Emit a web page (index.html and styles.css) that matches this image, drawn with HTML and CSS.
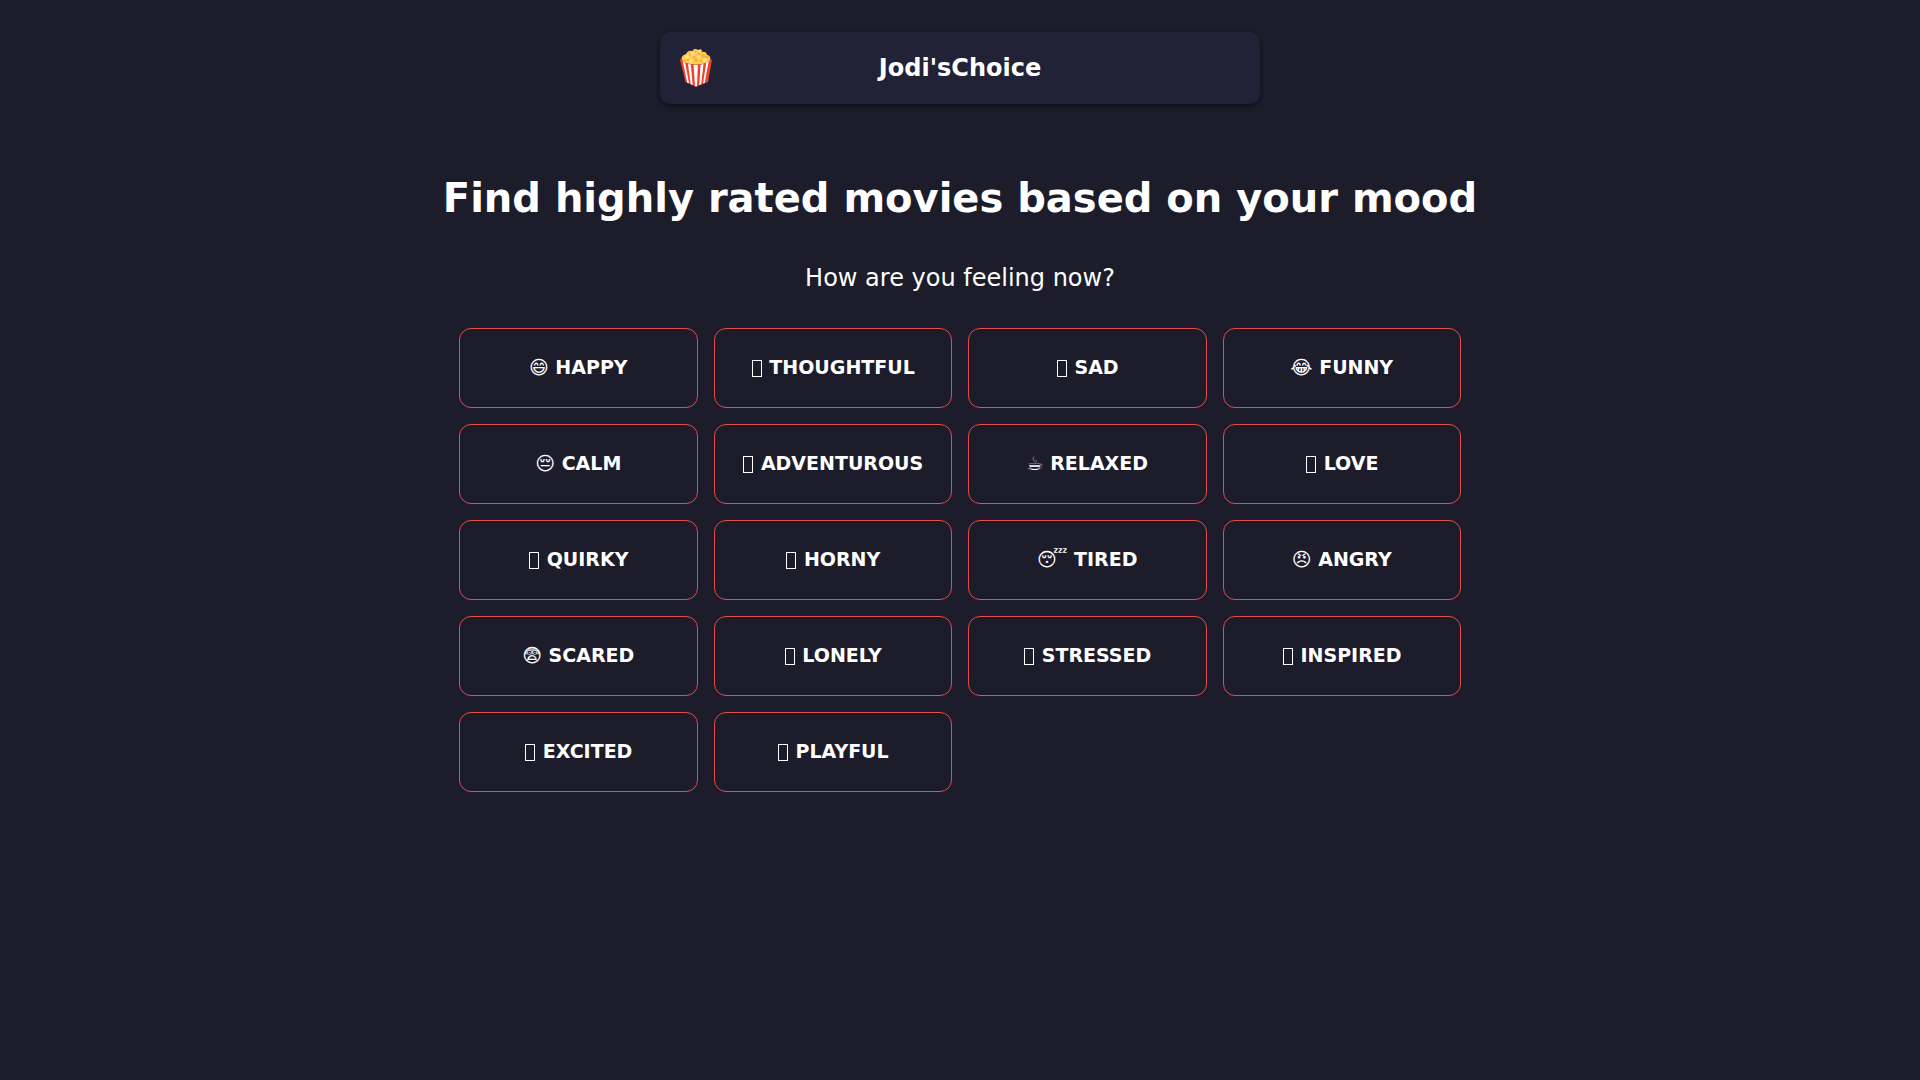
FILE: index.html
```html
<!DOCTYPE html>
<html lang="en">
<head>
<meta charset="utf-8">
<meta name="viewport" content="width=device-width, initial-scale=1">
<title>Jodi'sChoice</title>
<link rel="stylesheet" href="styles.css">
</head>
<body>
<header class="topbar">
  <svg class="logo" viewBox="0 0 40 40" aria-hidden="true">
    <path fill="#ffca4f" d="M6 13C4.500 9 7 7 10 6C11 3 14 2 17 3C17 0 21 1 22 2C25 0 27 2 25.500 4C29 3 31 5 31 7C34 7 35 10 34 13C30 18 10 18 6 13Z"/>
    <path fill="#f3402b" d="M4 11.500C5 11 6 12 7 13C13 18 27 18 33 13C34 12 35 11 36 12L32 34Q26 36 20 39Q14 36 9.500 34Z"/>
    <path fill="#fff" d="M6.800 13L9.200 15L13 35.300L11.200 34.700ZM12 16L14.800 16.600L16.700 37L14.700 36ZM17.600 17H21.800L21 38.300H19ZM24.500 16.700L27.500 16L25.200 36.200L23.300 37ZM30.200 14.800L32.700 13L28.700 35L27 35.500Z"/>
    <g fill="#ffe08a"><circle cx="11" cy="9" r="2"/><circle cx="17" cy="6" r="2"/><circle cx="23" cy="9" r="2"/><circle cx="29" cy="12" r="2"/><circle cx="15" cy="13" r="2"/><circle cx="23" cy="3" r="1"/></g>
    <g fill="#ffb52b"><circle cx="9" cy="12" r="1"/><circle cx="19" cy="3" r="1"/><circle cx="20" cy="12" r="2"/><circle cx="27" cy="8" r="2"/><circle cx="14" cy="7" r="1"/><circle cx="32" cy="9" r="1"/></g>
    <g fill="#de7a2c"><circle cx="12" cy="12" r=".7"/><circle cx="18" cy="9" r=".7"/><circle cx="23" cy="6" r=".7"/><circle cx="25" cy="13" r=".7"/><circle cx="30" cy="9" r=".7"/></g>
  </svg>
  <span class="brand">Jodi'sChoice</span>
</header>
<main class="content">
  <h1 class="title">Find highly rated movies based on your mood</h1>
  <p class="prompt">How are you feeling now?</p>
  <div class="moods">
    <button class="mood" type="button">😄 HAPPY</button>
    <button class="mood" type="button"><span class="box" aria-hidden="true"></span> THOUGHTFUL</button>
    <button class="mood" type="button"><span class="box" aria-hidden="true"></span> SAD</button>
    <button class="mood" type="button">😂 FUNNY</button>
    <button class="mood" type="button">😔 CALM</button>
    <button class="mood" type="button"><span class="box" aria-hidden="true"></span> ADVENTUROUS</button>
    <button class="mood" type="button">☕ RELAXED</button>
    <button class="mood" type="button"><span class="box" aria-hidden="true"></span> LOVE</button>
    <button class="mood" type="button"><span class="box" aria-hidden="true"></span> QUIRKY</button>
    <button class="mood" type="button"><span class="box" aria-hidden="true"></span> HORNY</button>
    <button class="mood" type="button">😴 TIRED</button>
    <button class="mood" type="button">😠 ANGRY</button>
    <button class="mood" type="button">😨 SCARED</button>
    <button class="mood" type="button"><span class="box" aria-hidden="true"></span> LONELY</button>
    <button class="mood" type="button"><span class="box" aria-hidden="true"></span> STRESSED</button>
    <button class="mood" type="button"><span class="box" aria-hidden="true"></span> INSPIRED</button>
    <button class="mood" type="button"><span class="box" aria-hidden="true"></span> EXCITED</button>
    <button class="mood" type="button"><span class="box" aria-hidden="true"></span> PLAYFUL</button>
  </div>
</main>
</body>
</html>
```
FILE: styles.css
```css
* {
  box-sizing: border-box;
}

body {
  margin: 0;
  padding: 32px 16px;
  min-height: 100vh;
  background: #1d1c2b;
  color: #fff;
  font-family: "DejaVu Sans", sans-serif;
}

.topbar {
  display: grid;
  grid-template-columns: 40px 1fr 40px;
  align-items: center;
  max-width: 600px;
  margin: 0 auto;
  padding: 16px;
  border-radius: 10px;
  background: #222237;
  box-shadow: 0 2px 5px rgba(0, 0, 0, 0.5);
}

.logo {
  width: 40px;
  height: 40px;
}

.brand {
  font-size: 24px;
  font-weight: 700;
  text-align: center;
}

.content {
  max-width: 1066px;
  margin: 0 auto;
  padding: 66px 0 0;
  text-align: center;
}

.title {
  margin: 0 0 32px;
  font-size: 40px;
  line-height: 56px;
}

.prompt {
  margin: 0 0 30px;
  font-size: 24px;
  line-height: 40px;
}

.moods {
  display: grid;
  grid-template-columns: repeat(4, 1fr);
  gap: 16px;
  padding: 0 32px;
}

.mood {
  height: 80px;
  padding: 0 16px 2px;
  border: 1px solid #e84b4b;
  border-radius: 12px;
  background: transparent;
  color: inherit;
  font: 700 19px "DejaVu Sans", sans-serif;
  white-space: nowrap;
  cursor: pointer;
}

.mood:hover {
  background: #222237;
}

.box {
  display: inline-block;
  width: 10px;
  height: 17px;
  margin: 0 1px;
  border: 1px solid #fff;
  vertical-align: -3px;
}

@media (max-width: 1000px) {
  .moods {
    grid-template-columns: repeat(2, 1fr);
  }
}
```
